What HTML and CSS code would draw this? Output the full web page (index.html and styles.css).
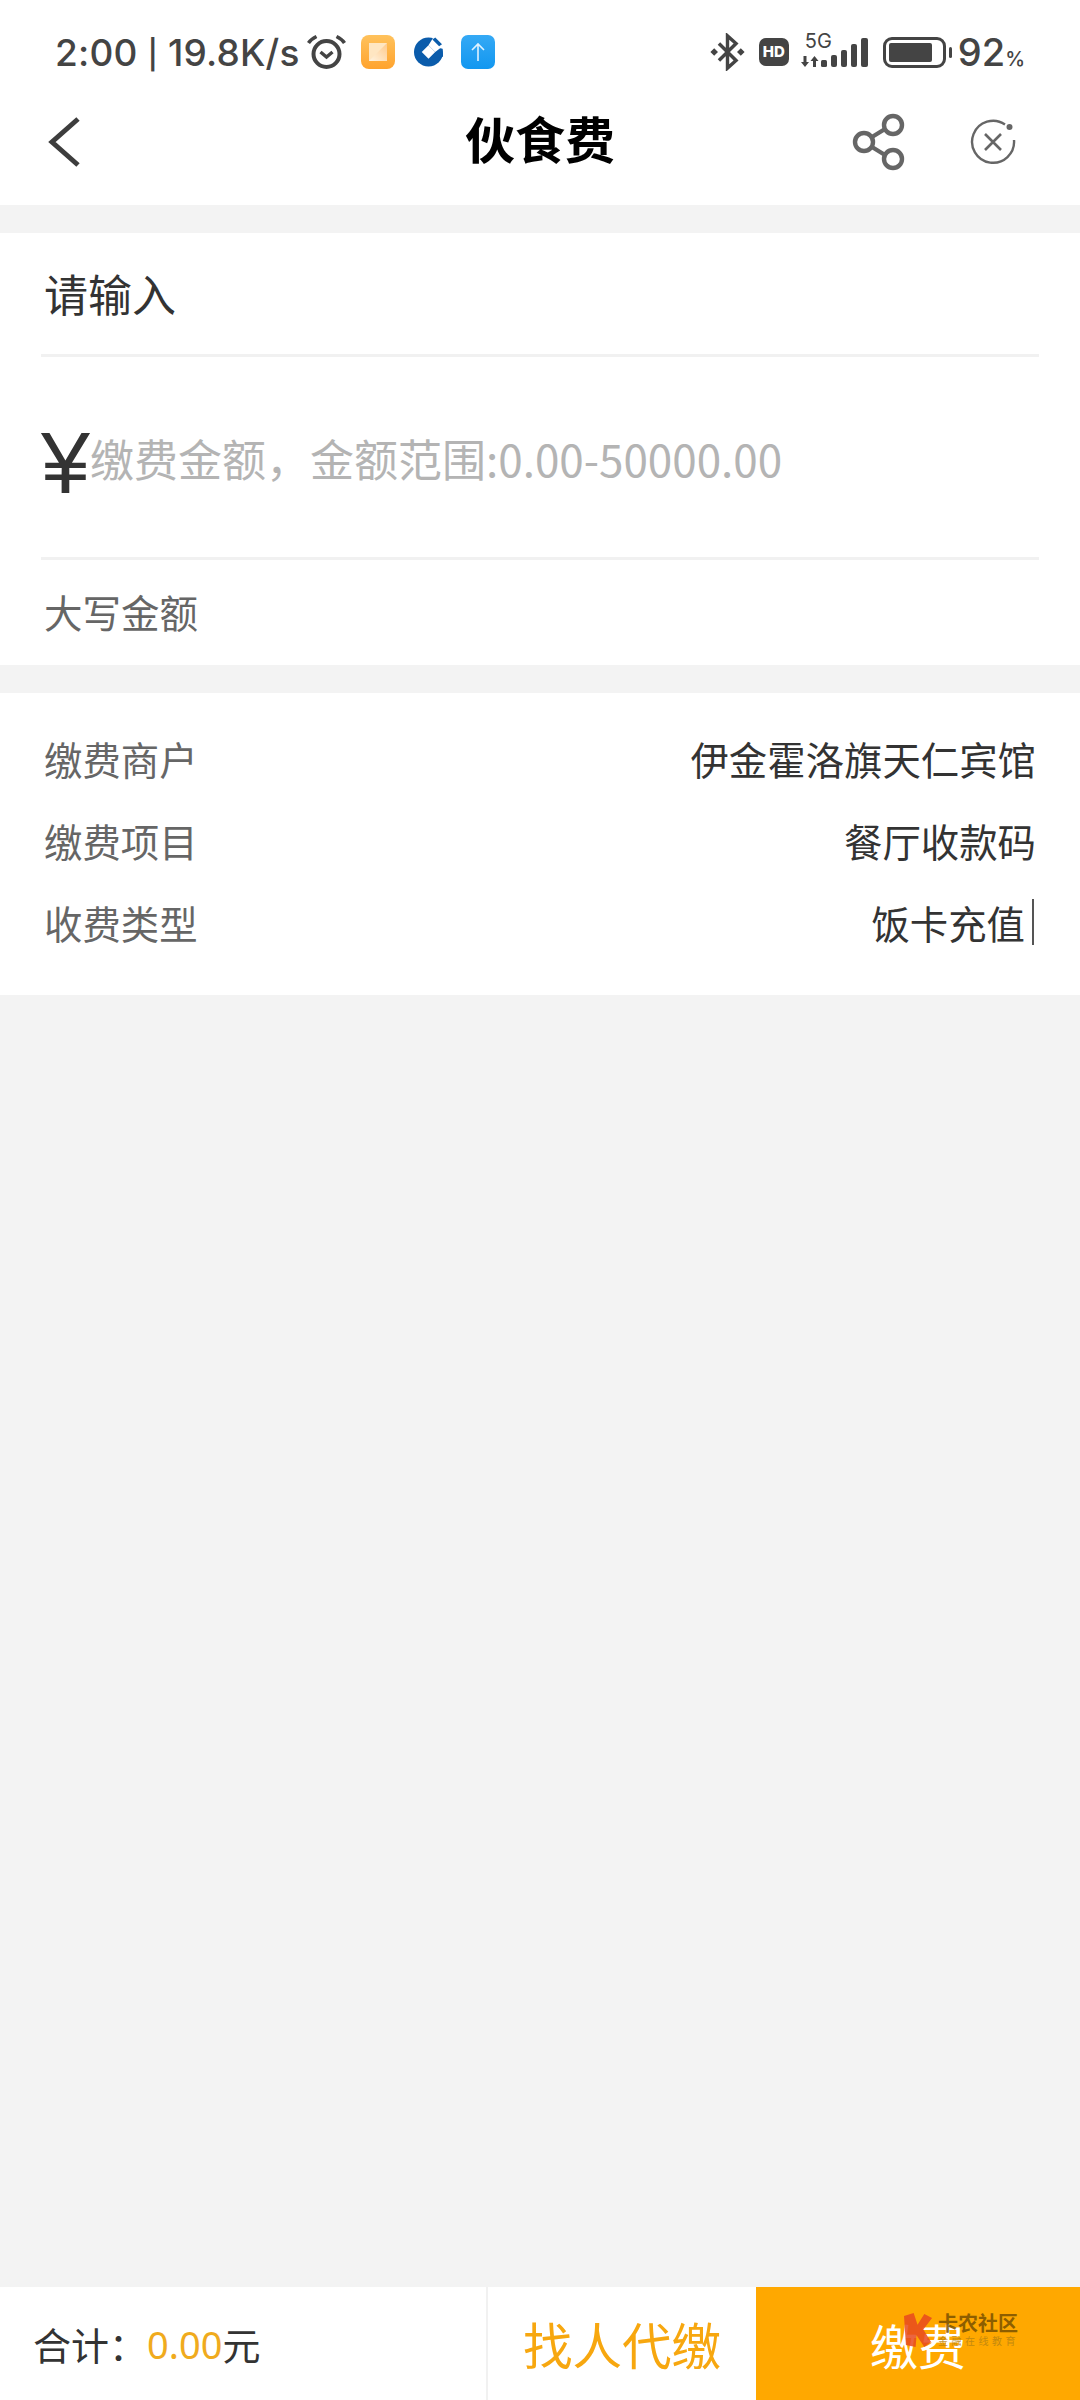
FILE: index.html
```html
<!DOCTYPE html>
<html lang="zh-CN">
<head>
  <meta charset="UTF-8">
  <title>伙食费</title>
  <link rel="stylesheet" href="styles.css">
</head>
<body>
  <div class="page">
    <header class="top">
      <div class="status">
        <div class="status-left">
          <span class="clock">2:00 <span class="sep">|</span> 19.8K/s</span>
          <svg class="ic-alarm" viewBox="0 0 39 36"><circle cx="19.500" cy="20" r="13" fill="none" stroke="#444" stroke-width="4"/><path d="M13.500 18l6 5 6-5" fill="none" stroke="#444" stroke-width="3.4"/><path d="M1.500 9c2-3 5-5 8-6.500M37.500 9c-2-3-5-5-8-6.500" fill="none" stroke="#444" stroke-width="3.6"/></svg>
          <svg class="ic-app" viewBox="0 0 34 34"><defs><linearGradient id="og" x1="0" y1="0" x2="0" y2="1"><stop offset="0" stop-color="#ffc25c"/><stop offset="1" stop-color="#ffa32e"/></linearGradient><linearGradient id="og2" x1="0" y1="1" x2="1" y2="0"><stop offset="0" stop-color="#fff4e2"/><stop offset="1" stop-color="#ffc98a"/></linearGradient></defs><rect width="34" height="34" rx="8" fill="url(#og)"/><path d="M8 8h18v18H8z" fill="#ffe6c2"/><path d="M8 26L26 8v18z" fill="url(#og2)"/></svg>
          <svg class="ic-bank" viewBox="0 0 30 30"><circle cx="15" cy="15" r="15" fill="#0b5cab"/><path d="M15 8l7 7-7 7-7-7z" fill="#fff"/><path d="M15 8l7 7 5-4 4 1V0H20z" fill="#fff"/><path d="M19 2l3-2 7 7-3 2z" fill="#0b5cab"/><path d="M21 21l9-1v-4l-7-1-4 4z" fill="#0b5cab"/></svg>
          <svg class="ic-app ic-up" viewBox="0 0 34 34"><defs><linearGradient id="bg" x1="0" y1="0" x2="0" y2="1"><stop offset="0" stop-color="#35a9f5"/><stop offset="1" stop-color="#1297f0"/></linearGradient></defs><rect width="34" height="34" rx="7" fill="url(#bg)"/><path d="M17 26V10M11 15l6-6 6 6" fill="none" stroke="#dff2ff" stroke-width="1.6"/></svg>
        </div>
        <div class="status-right">
          <svg class="ic-bt" viewBox="0 0 36 40"><path d="M9 11l18 18-9 8V3l9 8L9 29" fill="none" stroke="#444" stroke-width="3.6"/><path d="M4 16l4 4-4 4-4-4zM32 16l4 4-4 4-4-4z" fill="#444"/></svg>
          <span class="hd">HD</span>
          <div class="signal">
            <span class="fiveg">5G</span>
            <svg viewBox="0 0 67 29"><path d="M0 24h2.500v-6h3v6H8l-4 5zM9.500 23H12v6h3v-6h2.500l-4-5z" fill="#444"/><rect x="20" y="22" width="6" height="7" rx="1.500" fill="#444"/><rect x="30" y="17" width="6" height="12" rx="2" fill="#444"/><rect x="40" y="12" width="6" height="17" rx="2" fill="#444"/><rect x="50" y="6" width="6" height="23" rx="2" fill="#444"/><rect x="60" y="0" width="7" height="29" rx="2" fill="#444"/></svg>
          </div>
          <div class="battery"><div class="battery-fill"></div></div>
          <span class="pct">92<small>%</small></span>
        </div>
      </div>
      <nav class="nav">
        <svg class="ic-back" viewBox="0 0 34 52"><path d="M31 3L5 26l26 23" fill="none" stroke="#3d3d3d" stroke-width="5"/></svg>
        <h1 class="title">伙食费</h1>
        <svg class="ic-share" viewBox="0 0 54 58"><circle cx="41" cy="12" r="9" fill="none" stroke="#666" stroke-width="4.400"/><circle cx="41" cy="46" r="9" fill="none" stroke="#666" stroke-width="4.400"/><circle cx="12" cy="29" r="9" fill="none" stroke="#666" stroke-width="4.400"/><path d="M20 24l13-8M20 34l13 8" stroke="#666" stroke-width="4.400"/></svg>
        <svg class="ic-close" viewBox="0 0 46 46"><path d="M35 5.500A21 21 0 1 0 44 21" fill="none" stroke="#666" stroke-width="2.400"/><circle cx="39.500" cy="8" r="3" fill="#666"/><path d="M15 15l16 16M31 15L15 31" stroke="#666" stroke-width="2.600"/></svg>
      </nav>
    </header>

    <section class="panel pay">
      <div class="pay-name">请输入</div>
      <div class="pay-amount">
        <span class="yen">¥</span>
        <span class="placeholder">缴费金额，金额范围:0.00-50000.00</span>
      </div>
      <div class="pay-upper">大写金额</div>
    </section>

    <section class="panel detail">
      <div class="row"><span class="row-label">缴费商户</span><span class="row-value">伊金霍洛旗天仁宾馆</span></div>
      <div class="row"><span class="row-label">缴费项目</span><span class="row-value">餐厅收款码</span></div>
      <div class="row"><span class="row-label">收费类型</span><span class="row-value caret">饭卡充值</span></div>
    </section>

    <footer class="bar">
      <div class="total">合计：<span class="money">0.00</span>元</div>
      <div class="btn-other">找人代缴</div>
      <div class="btn-pay">缴费</div>
      <div class="mark">
        <svg viewBox="0 0 30 36"><path d="M0 3l10-3 4 12 7-11 8 4-9 12 8 13-7 5-8-12-1 12-10-2z" fill="#e8491f"/></svg>
        <div class="mark-text"><b>卡农社区</b><span>金融在线教育</span></div>
      </div>
    </footer>
  </div>
</body>
</html>
```

FILE: styles.css
```css
* {
  box-sizing: border-box;
}

body {
  margin: 0;
  background: #f3f3f3;
  font-family: "Noto Sans CJK SC", "Noto Sans", sans-serif;
}

.page {
  width: 1080px;
  height: 2400px;
  display: flex;
  flex-direction: column;
}

.top {
  background: #fff;
  height: 205px;
}

.status {
  height: 78px;
  padding: 27px 55px 0 55px;
  display: flex;
  justify-content: space-between;
  align-items: flex-start;
}

.status-left, .status-right {
  display: flex;
  align-items: center;
  height: 50px;
}

.clock {
  width: 252px;
  font-family: "Inter", sans-serif;
  font-size: 37px;
  font-weight: 500;
  letter-spacing: 0.2px;
  white-space: nowrap;
  color: #444;
}

.sep {
  font-family: "Roboto", sans-serif;
  font-size: 40px;
}

.ic-alarm {
  width: 39px;
  height: 36px;
  margin-right: 15px;
}

.ic-app {
  width: 34px;
  height: 34px;
}

.ic-bank {
  width: 29px;
  height: 30px;
  margin: 0 18px 0 19px;
}

.ic-bt {
  width: 35px;
  height: 38px;
  margin-right: 14px;
}

.hd {
  width: 30px;
  height: 28px;
  background: #444;
  border-radius: 7px;
  color: #fff;
  font-family: "Inter", sans-serif;
  font-size: 15px;
  font-weight: 800;
  line-height: 28px;
  text-align: center;
  margin-right: 12px;
}

.signal {
  width: 67px;
  height: 38px;
  position: relative;
  margin-right: 15px;
}

.signal svg {
  position: absolute;
  left: 0;
  top: 5px;
  width: 67px;
  height: 29px;
}

.fiveg {
  position: absolute;
  left: 4px;
  top: -2px;
  font-family: "Inter", sans-serif;
  font-size: 20px;
  line-height: 20px;
  color: #444;
}

.battery {
  width: 63px;
  height: 31px;
  border: 3px solid #444;
  border-radius: 9px;
  padding: 3px;
  position: relative;
  margin-right: 12px;
}

.battery::after {
  content: "";
  position: absolute;
  right: -9px;
  top: 7px;
  width: 3px;
  height: 11px;
  background: #444;
  border-radius: 2px;
}

.battery-fill {
  width: 43px;
  height: 100%;
  background: #444;
  border-radius: 2px;
}

.pct {
  font-family: "Inter", sans-serif;
  font-size: 38px;
  font-weight: 500;
  color: #444;
}

.pct small {
  font-size: 20px;
}

.nav {
  height: 127px;
  padding: 0 39px 0 47px;
  display: flex;
  align-items: center;
  position: relative;
}

.ic-back {
  width: 34px;
  height: 52px;
}

.title {
  position: absolute;
  left: 0;
  right: 0;
  margin: 0;
  padding-bottom: 9px;
  text-align: center;
  font-size: 50px;
  font-weight: 700;
  color: #000;
}

.ic-share {
  width: 54px;
  height: 58px;
  margin-left: auto;
}

.ic-close {
  width: 46px;
  height: 46px;
  margin: 0 25px 0 64px;
}

.panel {
  background: #fff;
}

.pay {
  margin-top: 28px;
  height: 432px;
  padding: 0 41px;
  display: flex;
  flex-direction: column;
}

.pay-name {
  height: 124px;
  padding: 0 3px 2px;
  display: flex;
  align-items: center;
  font-size: 44px;
  color: #333;
  border-bottom: 3px solid #f1f1f1;
}

.pay-amount {
  height: 203px;
  display: flex;
  align-items: center;
  border-bottom: 3px solid #f1f1f1;
}

.yen {
  font-family: "Liberation Sans", sans-serif;
  font-size: 88px;
  line-height: 100px;
  width: 49px;
  padding-top: 12px;
  color: #333;
}

.placeholder {
  padding-top: 2px;
  font-size: 44px;
  color: #b4b4b4;
}

.pay-upper {
  flex: 1;
  padding: 0 3px 4px;
  display: flex;
  align-items: center;
  font-size: 38.500px;
  color: #666;
}

.detail {
  margin-top: 28px;
  height: 302px;
  padding: 24px 44px 0;
}

.row {
  height: 82px;
  display: flex;
  justify-content: space-between;
  align-items: center;
  font-size: 38.400px;
}

.row-label {
  color: #666;
}

.row-value {
  color: #333;
}

.caret {
  line-height: 46px;
  border-right: 2px solid #555;
  padding-right: 7px;
  margin-right: 2px;
}

.bar {
  margin-top: auto;
  height: 113px;
  background: #fff;
  display: flex;
  position: relative;
}

.total {
  width: 488px;
  padding-left: 33px;
  display: flex;
  align-items: center;
  font-size: 38px;
  color: #333;
  border-right: 2px solid #f1f1f1;
}

.money {
  color: #f0ab1d;
  font-family: "Noto Sans", sans-serif;
}

.btn-other {
  width: 268px;
  display: flex;
  align-items: center;
  justify-content: center;
  font-size: 49.500px;
  color: #f7a70f;
}

.btn-pay {
  flex: 1;
  background: #ffa800;
  display: flex;
  align-items: center;
  justify-content: center;
  font-size: 48px;
  color: #fff;
}

.mark {
  position: absolute;
  left: 904px;
  top: 26px;
  display: flex;
  gap: 5px;
  opacity: 0.85;
}

.mark svg {
  width: 29px;
  height: 35px;
}

.mark-text {
  display: flex;
  flex-direction: column;
  line-height: 1;
}

.mark-text b {
  font-size: 20px;
  color: #7a5200;
}

.mark-text span {
  font-size: 10px;
  letter-spacing: 3.5px;
  white-space: nowrap;
  color: #b98412;
  margin-top: 3px;
}
```
